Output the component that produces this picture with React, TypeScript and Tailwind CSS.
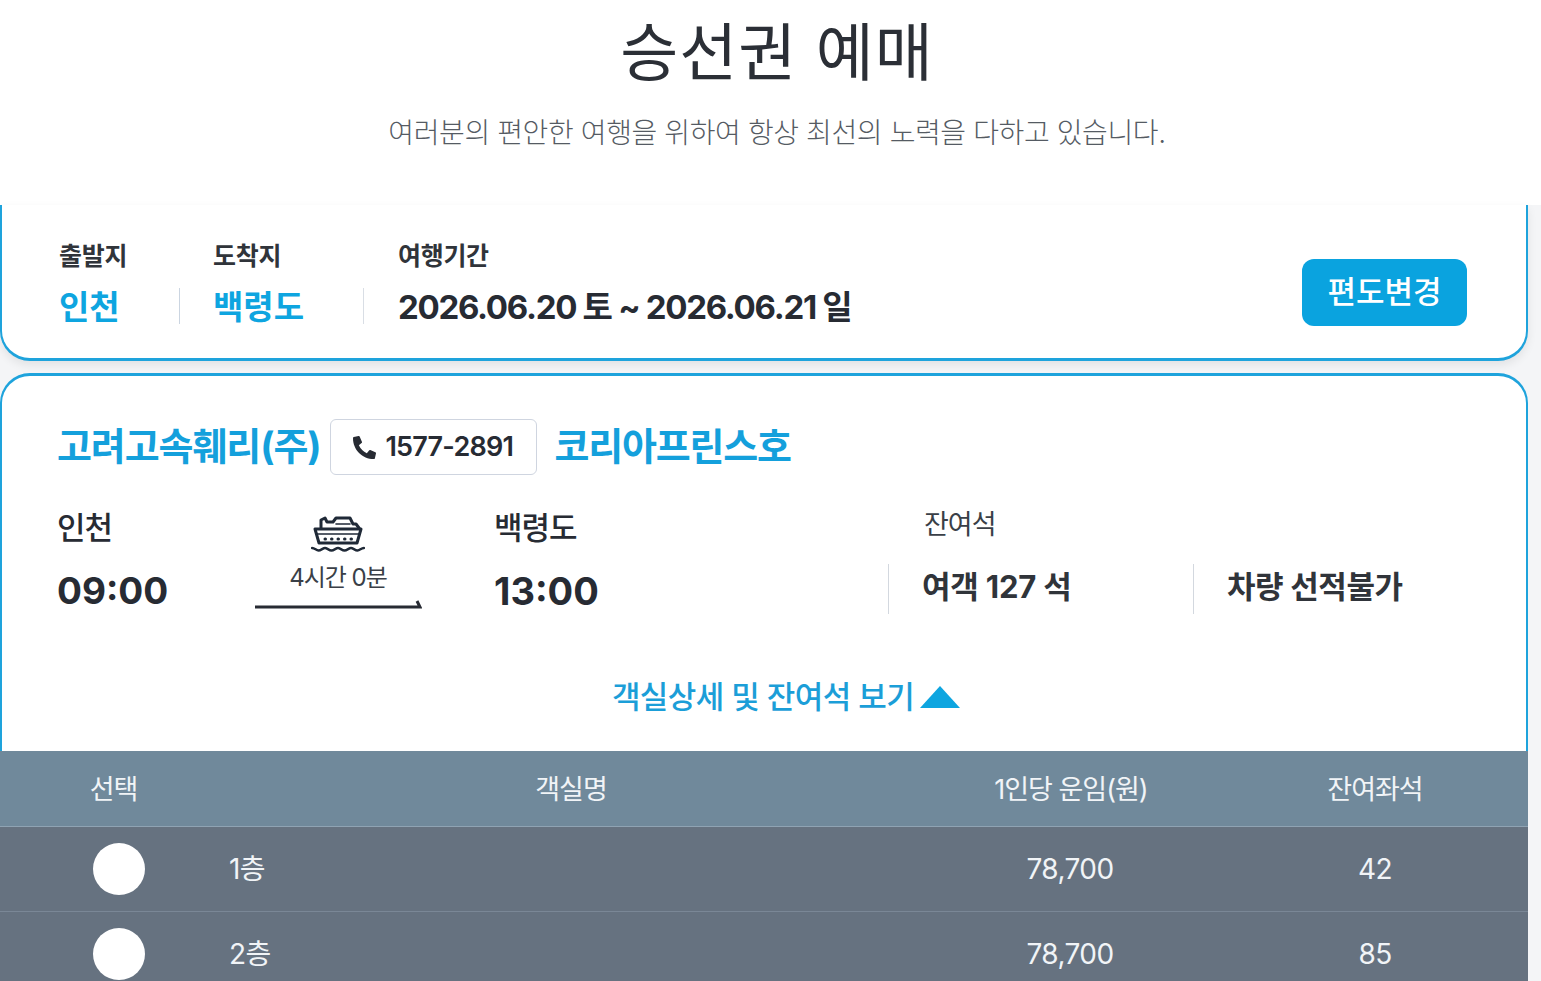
import { FaPhoneAlt } from 'react-icons/fa'

const font = "font-['Inter','Noto_Sans_CJK_KR','Noto_Sans',sans-serif]"

function ShipIcon() {
  return (
    <svg width="54" height="36" viewBox="0 0 54 36" fill="none" stroke="#1f2937" strokeWidth="3" strokeLinejoin="round" strokeLinecap="round">
      <path d="M10 12V4l4-2 2 4h6l3-4h14l3 6h3l3 4" />
      <path d="M25 8h14" strokeWidth="1.600" />
      <path d="M4 13h46l-4 14H8L4 13z" />
      <path d="M5 18h44" strokeWidth="1.600" />
      <path d="M14 23h.5M20.500 23h.5M27 23h.5M33.500 23h.5M40 23h.5" strokeWidth="3" />
      <path d="M1 32c3 0 4 2.500 6.500 2.500S12 32 14 32s4 2.500 6.500 2.500S25 32 27 32s4 2.500 6.500 2.500S38 32 40 32s4 2.500 6.500 2.500S50 32 53 32" strokeWidth="2.400" />
    </svg>
  )
}

function Row({ name, fare, seats }: { name: string; fare: string; seats: string }) {
  return (
    <div className="flex h-[85px] items-center border-b border-[#7a8796] bg-[#667280] text-[28px] tracking-[-0.6px] text-[#f1f4f7]">
      <div className="flex w-[229px] shrink-0">
        <span className="ml-[93px] size-[52px] rounded-full bg-white" />
      </div>
      <div className="w-[684px] shrink-0">{name}</div>
      <div className="w-[314px] shrink-0 text-center">{fare}</div>
      <div className="w-[296px] shrink-0 text-center">{seats}</div>
    </div>
  )
}

export default function App() {
  return (
    <div className={`${font} h-[981px] overflow-hidden bg-white`}>
      <header className="flex h-[205px] flex-col items-center pl-[13px]">
        <h1 className="mt-[8px] text-[63px] leading-[88px] font-normal tracking-[1px] text-[#2b2f36]">승선권 예매</h1>
        <p className="mt-[18px] text-[28px] leading-[38px] font-light tracking-[-0.4px] text-[#555b63]">
          여러분의 편안한 여행을 위하여 항상 최선의 노력을 다하고 있습니다.
        </p>
      </header>

      <main className="h-[776px] bg-[#f4f5f7]">
        <div className="w-[1528px]">
          <section className="flex h-[156px] items-start rounded-b-[30px] border-x-2 border-b-[3px] border-[#1ea3dc] bg-white pt-[33px] pl-[57px] shadow-[0_4px_10px_rgba(0,0,0,0.08)]">
            <div className="w-[120px]">
              <p className="text-[25px] leading-[36px] font-semibold tracking-[-0.3px] text-[#30343a]">출발지</p>
              <p className="mt-[9px] text-[33px] leading-[48px] font-bold text-[#0ea5e0]">인천</p>
            </div>
            <div className="mt-[50px] h-[36px] w-px bg-[#cbd5e1]" />
            <div className="w-[183px] pl-[33px]">
              <p className="text-[25px] leading-[36px] font-semibold tracking-[-0.3px] text-[#30343a]">도착지</p>
              <p className="mt-[9px] text-[33px] leading-[48px] font-bold whitespace-nowrap text-[#0ea5e0]">백령도</p>
            </div>
            <div className="mt-[50px] h-[36px] w-px bg-[#d9dee5]" />
            <div className="pl-[34px]">
              <p className="text-[25px] leading-[36px] font-semibold tracking-[-0.3px] text-[#30343a]">여행기간</p>
              <p className="mt-[9px] text-[33px] leading-[48px] font-bold tracking-[-1.300px] whitespace-nowrap text-[#272b33]">2026.06.20 토 ~ 2026.06.21 일</p>
            </div>
            <button className="mt-[21px] mr-[59px] ml-auto h-[67px] w-[165px] rounded-[12px] bg-[#0aa3df] text-[31px] font-medium text-white">
              편도변경
            </button>
          </section>

          <section className="mt-[12px]">
            <div className="h-[378px] rounded-t-[30px] border-x-2 border-t-[3px] border-[#1ea3dc] bg-white">
              <div className="flex items-center pt-[41px] pl-[55px]">
                <h2 className="text-[38px] leading-[56px] font-bold tracking-[-1.100px] whitespace-nowrap text-[#14a0dc]">고려고속훼리(주)</h2>
                <span className="mt-[2px] ml-[10px] flex h-[56px] w-[207px] items-center gap-[9px] rounded-[6px] border border-[#cfd5e0] pl-[22px] text-[27px] font-semibold tracking-[-0.8px] text-[#272b33]">
                  <FaPhoneAlt size={23} color="#272b33" />
                  1577-2891
                </span>
                <h2 className="ml-[17px] text-[38px] leading-[56px] font-bold tracking-[-1.200px] whitespace-nowrap text-[#14a0dc]">코리아프린스호</h2>
              </div>

              <div className="mt-[28px] flex h-[120px] items-start pl-[55px]">
                <div className="w-[197px]">
                  <p className="mt-[3px] text-[31px] leading-[44px] font-medium tracking-[-1px] text-[#272b33]">인천</p>
                  <p className="mt-[19px] text-[37px] leading-[44px] font-bold text-[#272b33]">09:00</p>
                </div>
                <div className="flex w-[168px] flex-col items-center pt-[13px]">
                  <ShipIcon />
                  <p className="mt-[10px] text-[24px] leading-[32px] tracking-[-1px] text-[#3a3f47]">4시간 0분</p>
                  <svg width="168" height="14" viewBox="0 0 168 14" fill="none" stroke="#272b33" strokeWidth="3" className="mt-[2px]">
                    <path d="M1 11h165l-3-6" />
                  </svg>
                </div>
                <div className="ml-[72px] w-[394px]">
                  <p className="mt-[3px] text-[31px] leading-[44px] font-medium tracking-[-1px] text-[#272b33]">백령도</p>
                  <p className="mt-[19px] text-[38px] leading-[44px] font-bold text-[#272b33]">13:00</p>
                </div>
                <div className="flex-1 pt-[3px]">
                  <p className="ml-[36px] text-[27px] leading-[38px] tracking-[-1px] text-[#3a3f47]">잔여석</p>
                  <div className="mt-[20px] flex items-center">
                    <div className="flex h-[50px] w-[305px] items-center border-l border-[#d3d8df] pb-[3px] pl-[33px] text-[31px] font-bold tracking-[-0.2px] whitespace-nowrap text-[#30343a]">여객 127 석</div>
                    <div className="flex h-[50px] items-center border-l border-[#d3d8df] pb-[3px] pl-[33px] text-[31px] font-bold tracking-[-0.4px] whitespace-nowrap text-[#30343a]">차량 선적불가</div>
                  </div>
                </div>
              </div>

              <div className="mt-[52px] flex items-center justify-center gap-[6px] pl-[44px] text-[31px] leading-[44px] font-medium tracking-[-0.6px] text-[#1b9ed8]">
                객실상세 및 잔여석 보기
                <svg width="40" height="24" viewBox="0 0 40 24" fill="#0ea5e0"><path d="M20 1l20 22H0z" /></svg>
              </div>
            </div>

            <div className="flex h-[76px] items-center border-b border-[#8fa3b3] bg-[#70899b] pt-[3px] text-[27px] tracking-[-1px] text-[#f1f4f7]">
              <div className="w-[227px] shrink-0 text-center">선택</div>
              <div className="w-[688px] shrink-0 text-center">객실명</div>
              <div className="w-[312px] shrink-0 text-center">1인당 운임(원)</div>
              <div className="w-[296px] shrink-0 text-center">잔여좌석</div>
            </div>
            <Row name="1층" fare="78,700" seats="42" />
            <Row name="2층" fare="78,700" seats="85" />
          </section>
        </div>
      </main>
    </div>
  )
}
